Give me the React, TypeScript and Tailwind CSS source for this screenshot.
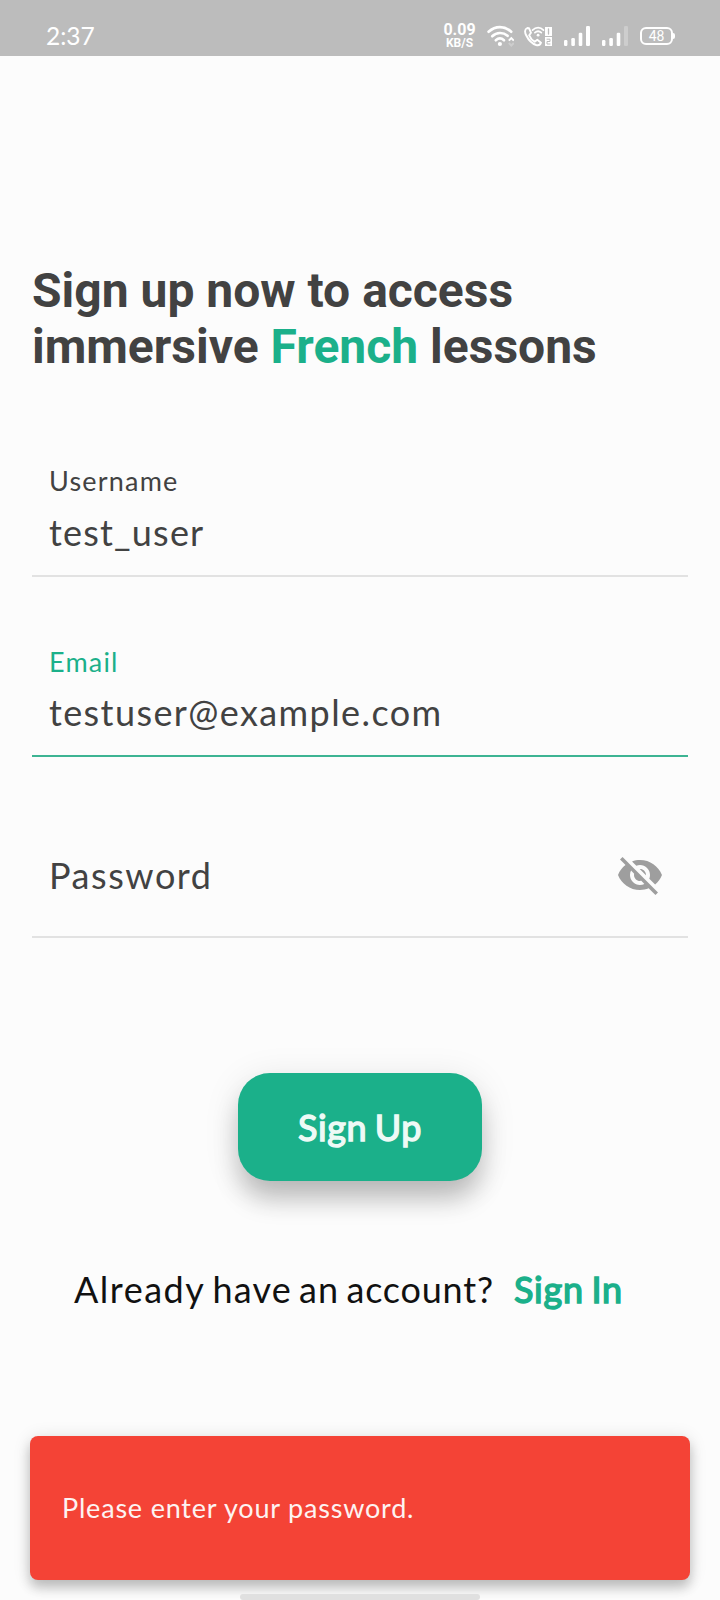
import React from "react";

function Bars({ dim = false }: { dim?: boolean }) {
  return (
    <svg width="26" height="20" viewBox="0 0 26 20" fill="#fff">
      <rect x="0" y="14" width="3.4" height="6" rx="1.2" />
      <rect x="7.3" y="12" width="3.6" height="8" rx="1.2" />
      <rect x="14.7" y="6.7" width="3.6" height="13.3" rx="1.2" />
      <rect x="22" y="0" width="4" height="20" rx="1.2" opacity={dim ? 0.25 : 1} />
    </svg>
  );
}

function StatusBar() {
  return (
    <div className="flex h-14 w-full shrink-0 bg-[#bcbcbc] pl-[46px] text-white">
      <div className="mt-[21px] w-[397px] shrink-0 font-['Lato'] text-[24.5px] leading-[30px]">2:37</div>
      <div className="mt-[23px] w-[33px] shrink-0 text-center font-['Roboto'] font-bold whitespace-nowrap">
        <div className="text-[16px] leading-[14px]">0.09</div>
        <div className="text-[12px] leading-[12px]">KB/S</div>
      </div>
      <svg className="mt-[25px] ml-[11px] shrink-0" width="27" height="22" viewBox="0 0 27 22" fill="none" stroke="#fff" strokeWidth="2.7" strokeLinecap="round">
        <path d="M1.6 6.7C8.5 .5 17.300 .5 24.200 6.700" />
        <path d="M5.200 11.200C9.800 7 16 7 20.600 10.800" />
        <path d="M8.800 15.200C11.300 13 14.500 13 17 15.200" />
        <circle cx="12.900" cy="19" r="2.100" fill="#fff" stroke="none" />
        <path d="M21.800 15.600l2.500-2.500 2.500 2.500" strokeWidth="2" strokeLinecap="butt" />
        <path d="M21.800 18l2.500 2.500 2.500-2.500" strokeWidth="2" opacity=".25" strokeLinecap="butt" />
      </svg>
      <svg className="mt-[26px] ml-[10px] shrink-0" width="29" height="21" viewBox="0 0 29 21" fill="none" stroke="#fff" strokeLinecap="round" strokeLinejoin="round">
        <path d="M3.300 2C.5 3.200.6 6.300 2.300 9.500C4.500 14 8 17.600 12.200 19C14.500 19.700 16.300 18.500 17 16.700L13.300 13.800L10.700 15.700C8.500 14.500 6.300 12 5.200 9.300L7 6.800L5 2.200Z" strokeWidth="1.900" />
        <path d="M8.500 4.200C12 .8 16.200.8 19.500 4.200M10.900 6.700C13 4.800 15.200 4.800 17.300 6.700" strokeWidth="1.700" />
        <circle cx="14.100" cy="9.200" r="1.400" fill="#fff" stroke="none" />
        <rect x="21" y="1" width="7" height="9" fill="#fff" stroke="none" />
        <rect x="21" y="11" width="7" height="9" fill="#fff" stroke="none" />
        <path d="M24.500 3v5" stroke="#bcbcbc" strokeWidth="1.300" />
        <path d="M23 13.200h3v2.300h-3v2.500h3" stroke="#bcbcbc" strokeWidth="1" />
      </svg>
      <div className="mt-[26px] ml-[11px] shrink-0"><Bars /></div>
      <div className="mt-[26px] ml-[12px] shrink-0"><Bars dim /></div>
      <div className="mt-[27px] ml-[12px] flex h-[18px] w-[33px] shrink-0 items-center justify-center rounded-[6px] border-2 border-white font-['Roboto'] text-[14px] leading-none">48</div>
      <div className="mt-[33px] h-[6px] w-[2px] rounded-r bg-white" />
    </div>
  );
}

function Field({ label, value, active = false }: { label: string; value: string; active?: boolean }) {
  return (
    <div className={`border-b-2 pl-[17px] ${active ? "h-[111px] border-[#3db493]" : "h-[112px] border-[#e2e2e2]"}`}>
      <div className={`h-8 text-[27px] leading-8 tracking-[1.2px] ${active ? "text-[#1bb08a]" : "text-[#424242]"}`}>{label}</div>
      <div className={`h-11 text-[36px] leading-[44px] text-[#424242] ${active ? "mt-3 tracking-[1.4px]" : "mt-[13px] tracking-[1.2px]"}`}>{value}</div>
    </div>
  );
}

export default function App() {
  return (
    <div className="flex h-[1600px] w-[720px] flex-col overflow-hidden bg-[#fcfcfc] font-['Lato',sans-serif] whitespace-nowrap">
      <StatusBar />
      <main className="flex shrink-0 flex-col px-8">
        <h1 className="mt-[207px] font-['Roboto',sans-serif] text-[48px] leading-[56px] font-bold text-[#424242]">
          Sign up now to access
          <br />
          immersive <span className="text-[#1bb08a]">French</span> lessons
        </h1>
        <div className="mt-[90px]"><Field label="Username" value="test_user" /></div>
        <div className="mt-[69px]"><Field label="Email" value="testuser@example.com" active /></div>
        <div className="mt-[96px] flex h-[85px] justify-between border-b-2 border-[#e2e2e2] pr-6 pl-[17px]">
          <span className="text-[36px] leading-[44px] tracking-[1.55px] text-[#424242]">Password</span>
          <svg className="-mt-[2px]" width="48" height="48" viewBox="0 0 24 24" fill="#9e9e9e">
            <path d="M12 7c2.760 0 5 2.240 5 5 0 .65-.13 1.260-.36 1.830l2.920 2.920c1.510-1.260 2.700-2.890 3.430-4.750-1.730-4.390-6-7.500-11-7.500-1.400 0-2.740.25-3.980.7l2.160 2.160C10.740 7.130 11.350 7 12 7zM2 4.270l2.280 2.280.46.46C3.080 8.300 1.780 10.020 1 12c1.730 4.390 6 7.500 11 7.500 1.550 0 3.030-.3 4.380-.84l.42.42L19.730 22 21 20.730 3.270 3 2 4.270zM7.530 9.800l1.550 1.550c-.05.21-.08.43-.08.65 0 1.660 1.340 3 3 3 .22 0 .44-.03.65-.08l1.550 1.550c-.67.33-1.410.53-2.200.53-2.760 0-5-2.240-5-5 0-.79.2-1.530.53-2.200zm4.310-.78l3.150 3.150.02-.16c0-1.660-1.340-3-3-3l-.17.010z" />
          </svg>
        </div>
        <button className="mt-[135px] h-[108px] w-[244px] self-center rounded-[32px] bg-[#1bb08a] text-[36px] leading-[44px] tracking-[0.6px] text-[#eefaf6] shadow-[0_20px_26px_-2px_rgba(0,0,0,0.22),0_6px_36px_rgba(0,0,0,0.1)] [-webkit-text-stroke:1.4px_#eefaf6] [word-spacing:-2.25px]">
          Sign Up
        </button>
        <div className="mt-[86px] flex h-11 pl-[42px] text-[36px] leading-[44px]">
          <span className="w-[440px] tracking-[1.2px] text-[#111] [word-spacing:-3.3px]">
            <span className="tracking-[1.5px]">Already</span> have an <span className="tracking-[0.8px]">account?</span>
          </span>
          <span className="tracking-[0.72px] text-[#1bb08a] [-webkit-text-stroke:1.5px_#1bb08a] [word-spacing:-2.25px]">Sign In</span>
        </div>
      </main>
      <div className="mx-[30px] mt-[125px] flex h-36 shrink-0 items-center rounded-lg bg-[#f44336] pl-8 text-[27px] tracking-[0.8px] text-[#fdf3f2] shadow-[0_8px_12px_rgba(0,0,0,0.2),0_2px_18px_rgba(0,0,0,0.12)]">
        Please enter your password.
      </div>
      <div className="mt-[14px] h-1.5 w-60 shrink-0 self-center rounded-full bg-[#e0e0e0]" />
    </div>
  );
}
